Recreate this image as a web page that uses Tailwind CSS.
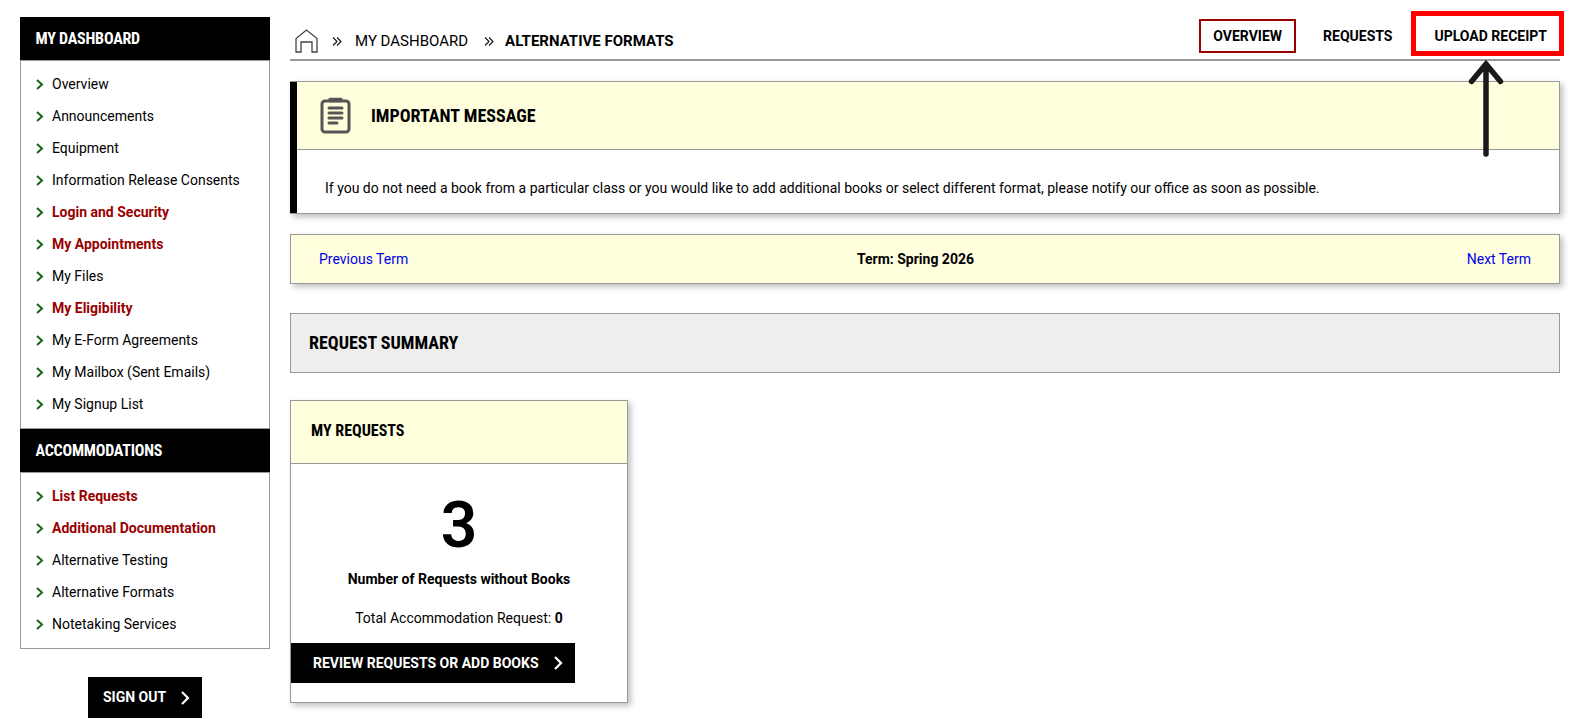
<!DOCTYPE html>
<html lang="en">
<head>
<meta charset="utf-8">
<title>My Dashboard</title>
<script src="https://cdn.jsdelivr.net/npm/@tailwindcss/browser@4"></script>
</head>
<body class="bg-white text-black font-['Roboto',sans-serif] text-[14px] overflow-hidden">
<div class="relative flex h-[719px] w-[1572px] items-start gap-5 pl-5 pt-[17px]">

  <aside class="flex w-[250px] shrink-0 flex-col">
    <h2 class="flex h-[43px] items-center bg-black pl-[15.500px] text-[16px] font-bold tracking-[-0.22px] text-white font-['Roboto_Condensed','Roboto',sans-serif] [font-stretch:75%]">MY DASHBOARD</h2>
    <ul class="border border-[#999] pt-[7px] pb-2">
      <li class="flex h-8 items-center gap-2 pl-[15px]"><svg class="h-[11px] w-2 text-[#166616]" viewBox="0 0 8 11" fill="none" stroke="currentColor" stroke-width="2"><path d="M1 1l5 4.500L1 10"/></svg><a>Overview</a></li>
      <li class="flex h-8 items-center gap-2 pl-[15px]"><svg class="h-[11px] w-2 text-[#166616]" viewBox="0 0 8 11" fill="none" stroke="currentColor" stroke-width="2"><path d="M1 1l5 4.500L1 10"/></svg><a>Announcements</a></li>
      <li class="flex h-8 items-center gap-2 pl-[15px]"><svg class="h-[11px] w-2 text-[#166616]" viewBox="0 0 8 11" fill="none" stroke="currentColor" stroke-width="2"><path d="M1 1l5 4.500L1 10"/></svg><a>Equipment</a></li>
      <li class="flex h-8 items-center gap-2 pl-[15px]"><svg class="h-[11px] w-2 text-[#166616]" viewBox="0 0 8 11" fill="none" stroke="currentColor" stroke-width="2"><path d="M1 1l5 4.500L1 10"/></svg><a>Information Release Consents</a></li>
      <li class="flex h-8 items-center gap-2 pl-[15px]"><svg class="h-[11px] w-2 text-[#166616]" viewBox="0 0 8 11" fill="none" stroke="currentColor" stroke-width="2"><path d="M1 1l5 4.500L1 10"/></svg><a class="font-bold text-[#990000]">Login and Security</a></li>
      <li class="flex h-8 items-center gap-2 pl-[15px]"><svg class="h-[11px] w-2 text-[#166616]" viewBox="0 0 8 11" fill="none" stroke="currentColor" stroke-width="2"><path d="M1 1l5 4.500L1 10"/></svg><a class="font-bold text-[#990000]">My Appointments</a></li>
      <li class="flex h-8 items-center gap-2 pl-[15px]"><svg class="h-[11px] w-2 text-[#166616]" viewBox="0 0 8 11" fill="none" stroke="currentColor" stroke-width="2"><path d="M1 1l5 4.500L1 10"/></svg><a>My Files</a></li>
      <li class="flex h-8 items-center gap-2 pl-[15px]"><svg class="h-[11px] w-2 text-[#166616]" viewBox="0 0 8 11" fill="none" stroke="currentColor" stroke-width="2"><path d="M1 1l5 4.500L1 10"/></svg><a class="font-bold text-[#990000]">My Eligibility</a></li>
      <li class="flex h-8 items-center gap-2 pl-[15px]"><svg class="h-[11px] w-2 text-[#166616]" viewBox="0 0 8 11" fill="none" stroke="currentColor" stroke-width="2"><path d="M1 1l5 4.500L1 10"/></svg><a>My E-Form Agreements</a></li>
      <li class="flex h-8 items-center gap-2 pl-[15px]"><svg class="h-[11px] w-2 text-[#166616]" viewBox="0 0 8 11" fill="none" stroke="currentColor" stroke-width="2"><path d="M1 1l5 4.500L1 10"/></svg><a>My Mailbox (Sent Emails)</a></li>
      <li class="flex h-8 items-center gap-2 pl-[15px]"><svg class="h-[11px] w-2 text-[#166616]" viewBox="0 0 8 11" fill="none" stroke="currentColor" stroke-width="2"><path d="M1 1l5 4.500L1 10"/></svg><a>My Signup List</a></li>
    </ul>
    <h2 class="flex h-[43px] items-center bg-black pl-[15.500px] text-[16px] font-bold tracking-[-0.22px] text-white font-['Roboto_Condensed','Roboto',sans-serif] [font-stretch:75%]">ACCOMMODATIONS</h2>
    <ul class="border border-[#999] pt-[7px] pb-2">
      <li class="flex h-8 items-center gap-2 pl-[15px]"><svg class="h-[11px] w-2 text-[#166616]" viewBox="0 0 8 11" fill="none" stroke="currentColor" stroke-width="2"><path d="M1 1l5 4.500L1 10"/></svg><a class="font-bold text-[#990000]">List Requests</a></li>
      <li class="flex h-8 items-center gap-2 pl-[15px]"><svg class="h-[11px] w-2 text-[#166616]" viewBox="0 0 8 11" fill="none" stroke="currentColor" stroke-width="2"><path d="M1 1l5 4.500L1 10"/></svg><a class="font-bold text-[#990000]">Additional Documentation</a></li>
      <li class="flex h-8 items-center gap-2 pl-[15px]"><svg class="h-[11px] w-2 text-[#166616]" viewBox="0 0 8 11" fill="none" stroke="currentColor" stroke-width="2"><path d="M1 1l5 4.500L1 10"/></svg><a>Alternative Testing</a></li>
      <li class="flex h-8 items-center gap-2 pl-[15px]"><svg class="h-[11px] w-2 text-[#166616]" viewBox="0 0 8 11" fill="none" stroke="currentColor" stroke-width="2"><path d="M1 1l5 4.500L1 10"/></svg><a>Alternative Formats</a></li>
      <li class="flex h-8 items-center gap-2 pl-[15px]"><svg class="h-[11px] w-2 text-[#166616]" viewBox="0 0 8 11" fill="none" stroke="currentColor" stroke-width="2"><path d="M1 1l5 4.500L1 10"/></svg><a>Notetaking Services</a></li>
    </ul>
    <a class="mt-7 flex h-[41px] w-[114px] items-center gap-[15px] self-center bg-black pl-[15px] font-bold text-white">SIGN OUT
      <svg class="h-[14px] w-[9px]" viewBox="0 0 9 14" fill="none" stroke="currentColor" stroke-width="2.200"><path d="M1 1l6 6-6 6"/></svg></a>
  </aside>

  <main class="flex w-[1270px] shrink-0 flex-col">
    <header class="flex h-[44px] items-end justify-between border-b-2 border-[#999]">
      <nav class="flex items-center pb-[6px] pl-[5px] text-[15px]">
        <svg class="h-[24px] w-[23px] text-[#444]" viewBox="0 0 23 24" fill="none" stroke="currentColor" stroke-width="1.300"><path d="M1 23V9.500L11.500 1 22 9.500V23h-5V13H6v10z"/></svg>
        <svg class="ml-[14px] h-[9px] w-[10px] text-[#111]" viewBox="0 0 10 9" fill="none" stroke="currentColor" stroke-width="1.100"><path d="M1 .5l4 4-4 4M5 .5l4 4-4 4"/></svg>
        <a class="ml-[13px]">MY DASHBOARD</a>
        <svg class="ml-[16px] h-[9px] w-[10px] text-[#111]" viewBox="0 0 10 9" fill="none" stroke="currentColor" stroke-width="1.100"><path d="M1 .5l4 4-4 4M5 .5l4 4-4 4"/></svg>
        <strong class="ml-[11px] font-bold">ALTERNATIVE FORMATS</strong>
      </nav>
      <div class="mb-[6px] flex items-center font-bold">
        <a class="flex h-[34px] items-center border-2 border-[#990000] px-3">OVERVIEW</a>
        <a class="ml-[14px] flex h-[34px] items-center px-[13px]">REQUESTS</a>
        <a class="ml-[16px] flex h-[34px] items-center px-[13px]">UPLOAD RECEIPT</a>
      </div>
    </header>

    <section class="mt-5 border border-l-0 border-[#999] shadow-[3px_3px_6px_rgba(0,0,0,0.25)]">
      <div class="border-l-[7px] border-black">
        <div class="flex h-[68px] items-center border-b border-[#999] bg-[#ffffdd] pl-[23px]">
          <svg class="h-[37px] w-[31px] text-[#555]" viewBox="0 0 31 37" fill="none" stroke="currentColor" stroke-width="3" stroke-linecap="round"><rect x="2" y="4" width="27" height="31" rx="3"/><rect x="9" y="1.500" width="13" height="3" rx="1" fill="currentColor" stroke-width="1.500"/><path d="M9 11h13M9 16h13M9 21h13M9 26h8"/></svg>
          <h2 class="ml-5 text-[18px] font-bold font-['Roboto_Condensed','Roboto',sans-serif] [font-stretch:75%]">IMPORTANT MESSAGE</h2>
        </div>
        <p class="flex h-[63px] items-center pl-7 pt-[13px]">If you do not need a book from a particular class or you would like to add additional books or select different format, please notify our office as soon as possible.</p>
      </div>
    </section>

    <section class="mt-5 flex h-[50px] items-center justify-between border border-[#999] bg-[#ffffdd] px-7 shadow-[3px_3px_6px_rgba(0,0,0,0.25)]">
      <a class="text-[#0000ee]">Previous Term</a>
      <strong class="mr-[44px] font-bold">Term: Spring 2026</strong>
      <a class="text-[#0000ee]">Next Term</a>
    </section>

    <section class="mt-[29px] flex h-[60px] items-center border border-[#999] bg-[#eeeeee] pl-[18px] pb-[2px]">
      <h2 class="text-[18px] font-bold font-['Roboto_Condensed','Roboto',sans-serif] [font-stretch:75%]">REQUEST SUMMARY</h2>
    </section>

    <section class="mt-[27px] h-[303px] w-[338px] border border-[#999] shadow-[3px_3px_6px_rgba(0,0,0,0.25)]">
      <h3 class="flex h-[63px] items-center border-b border-[#999] bg-[#ffffdd] pl-5 pb-[2px] text-[16px] font-bold font-['Roboto_Condensed','Roboto',sans-serif] [font-stretch:75%]">MY REQUESTS</h3>
      <div class="flex flex-col">
        <div class="mt-[24px] text-center text-[64px] leading-[75px] font-semibold">3</div>
        <div class="mt-[6px] text-center font-bold">Number of Requests without Books</div>
        <div class="mt-[18px] text-center">Total Accommodation Request: <b>0</b></div>
        <a class="mt-[14px] flex h-[40px] w-[284px] items-center gap-[15px] bg-black pl-[22px] font-bold text-white">REVIEW REQUESTS OR ADD BOOKS
          <svg class="h-[14px] w-[9px]" viewBox="0 0 9 14" fill="none" stroke="currentColor" stroke-width="2.200"><path d="M1 1l6 6-6 6"/></svg></a>
      </div>
    </section>
  </main>

  <div class="absolute left-[1411px] top-[11px] h-[45px] w-[153px] border-[5px] border-[#ff0000]"></div>
  <svg class="absolute left-[1468px] top-[58px] h-[100px] w-[36px] text-[#1a1a1a]" viewBox="0 0 36 100" fill="none" stroke="currentColor" stroke-width="5.500" stroke-linecap="round" stroke-linejoin="miter"><path d="M18 96V6M3.500 23.500L18 6l14.500 17.500"/></svg>
</div>
</body>
</html>
